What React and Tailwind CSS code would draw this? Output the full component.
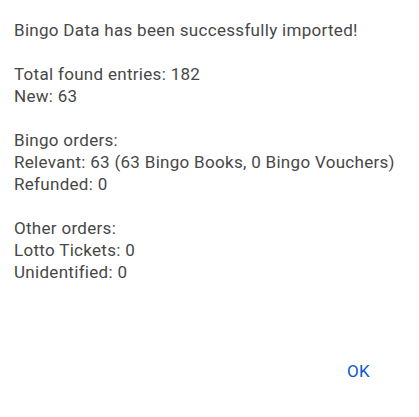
import React from "react";

const lines = [
  "Bingo Data has been successfully imported!",
  "",
  "Total found entries: 182",
  "New: 63",
  "",
  "Bingo orders:",
  "Relevant: 63 (63 Bingo Books, 0 Bingo Vouchers)",
  "Refunded: 0",
  "",
  "Other orders:",
  "Lotto Tickets: 0",
  "Unidentified: 0",
];

const App = () => {
  return (
    <div
      className="w-[419px] h-[417px] bg-white flex flex-col text-[#474747]"
      style={{ fontFamily: "Roboto, 'Noto Sans', sans-serif" }}
    >
      <div className="pt-[19px] pl-[14px] text-[17px] leading-[22px] tracking-[0.3px] whitespace-pre">
        {lines.map((line, i) => (
          <div key={i}>{line || " "}</div>
        ))}
      </div>
      <div className="flex justify-end mt-[71px] pr-[37px]">
        <button className="px-[12px] h-[36px] text-[17px] font-normal tracking-[0.3px] text-[#0b57d0] rounded-full">
          OK
        </button>
      </div>
    </div>
  );
};

export default App;
